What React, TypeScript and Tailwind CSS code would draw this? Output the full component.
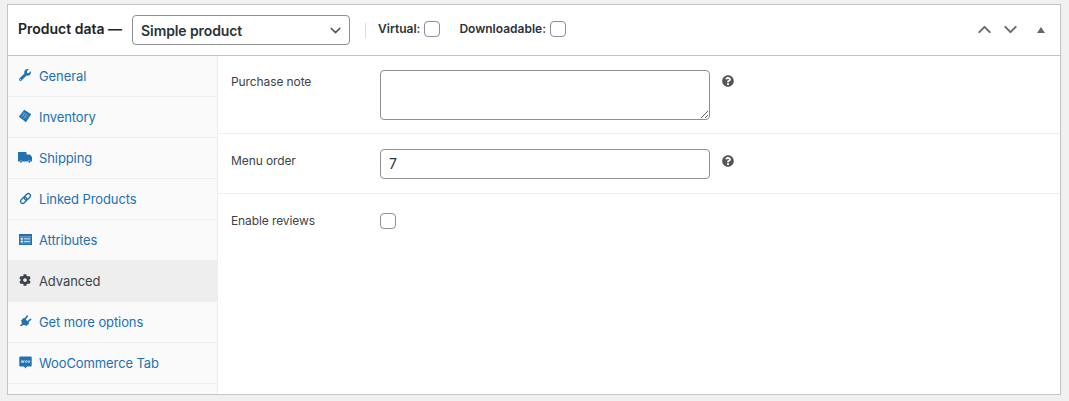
import React from 'react';
import { FaWrench, FaCog, FaQuestionCircle } from 'react-icons/fa';
import { ChevronDown, ChevronUp } from 'lucide-react';

type IconProps = { className?: string };

function WooIcon({ className }: IconProps) {
  return (
    <svg viewBox="0 0 14 14" className={className}>
      <path d="M1.5 0.5h11a1.2 1.2 0 0 1 1.2 1.2v8.4a1.2 1.2 0 0 1-1.2 1.2H8.6L7 13.4 5.4 11.3H1.5a1.2 1.2 0 0 1-1.2-1.2V1.700a1.2 1.2 0 0 1 1.200-1.200z" fill="currentColor" />
      <path d="M2.500 4.800l.7 2.400.8-2.400.8 2.400.7-2.400" fill="none" stroke="#fff" strokeWidth="0.7" />
      <circle cx="7.800" cy="6" r="1" fill="none" stroke="#fff" strokeWidth="0.7" />
      <circle cx="10.700" cy="6" r="1" fill="none" stroke="#fff" strokeWidth="0.7" />
    </svg>
  );
}

function InventoryIcon({ className }: IconProps) {
  return (
    <svg viewBox="0 0 14 14" className={className}>
      <path d="M6.200 0.800L13.200 5.200 8 13.200 0.800 7.800z" fill="currentColor" />
      <path d="M5 3.500l5.500 3.800M3.500 5.500l5.500 3.800M5.600 9.800L8.800 4.800M3.700 8.400L6.800 3.500" stroke="#fff" strokeWidth="0.5" opacity="0.6" />
    </svg>
  );
}

function TruckIcon({ className }: IconProps) {
  return (
    <svg viewBox="0 0 14 11" className={className}>
      <path d="M0 0h8.500v2.500h3.500l2 2.500v4.500h-1.300a1.500 1.500 0 0 0-2.900 0H4.200a1.500 1.500 0 0 0-2.900 0H0z" fill="currentColor" />
      <circle cx="2.800" cy="9.800" r="1" fill="currentColor" />
      <circle cx="11.300" cy="9.800" r="1" fill="currentColor" />
    </svg>
  );
}

function LinkIcon({ className }: IconProps) {
  return (
    <svg viewBox="0 0 14 14" className={className}>
      <g fill="none" stroke="currentColor" strokeWidth="1.500" transform="rotate(-45 7 7)">
        <rect x="0.500" y="4.700" width="7.500" height="4.600" rx="2.300" />
        <rect x="6" y="4.700" width="7.500" height="4.600" rx="2.300" />
      </g>
    </svg>
  );
}

function AttributesIcon({ className }: IconProps) {
  return (
    <svg viewBox="0 0 13 11" className={className}>
      <path fillRule="evenodd" d="M0 0h13v11H0zM1 2.500v7.500h11V2.500z" fill="currentColor" />
      <path d="M1 2.500h11v7.500H1z" fill="currentColor" opacity="0.85" />
      <rect x="1.800" y="4" width="2" height="1.600" fill="#fff" />
      <rect x="1.800" y="6.800" width="2" height="1.600" fill="#fff" />
      <path d="M5 4.800h6M5 7.600h6" stroke="#fff" strokeWidth="0.8" />
    </svg>
  );
}

function PlugIcon({ className }: IconProps) {
  return (
    <svg viewBox="0 0 14 14" className={className}>
      <path d="M1 13l2.200-2.400-.9-3.200 3-3 6 6-.2.100-2.800 2.700-3.200-.9L2 13.700z" fill="currentColor" transform="translate(0 -1.500)" />
      <path d="M6.300 4.500L9 1.200M9.200 7.500l3.300-2.700" stroke="currentColor" strokeWidth="1.700" strokeLinecap="round" />
    </svg>
  );
}

const tabs = [
  { label: 'General', icon: <FaWrench className="w-[12px] h-[12px]" /> },
  { label: 'Inventory', icon: <InventoryIcon className="w-[14px] h-[14px]" /> },
  { label: 'Shipping', icon: <TruckIcon className="w-[14px] h-[11px]" /> },
  { label: 'Linked Products', icon: <LinkIcon className="w-[13px] h-[13px]" /> },
  { label: 'Attributes', icon: <AttributesIcon className="w-[13px] h-[11px]" /> },
  { label: 'Advanced', icon: <FaCog className="w-[12px] h-[12px]" />, active: true },
  { label: 'Get more options', icon: <PlugIcon className="w-[13px] h-[13px]" /> },
  { label: 'WooCommerce Tab', icon: <WooIcon className="w-[13px] h-[13px]" /> },
];

function HelpIcon() {
  return <FaQuestionCircle className="w-[12px] h-[12px] text-[#555]" />;
}

function Checkbox({ className = '' }: { className?: string }) {
  return <input type="checkbox" className={`appearance-none w-4 h-4 bg-white border border-[#8c8f94] rounded ${className}`} />;
}

export default function App() {
  return (
    <div className="w-[1069px] h-[401px] bg-[#f0f0f1] pt-1 pl-[7px] overflow-hidden font-['Inter',sans-serif] text-[13px] text-[#3c434a]">
      <div className="w-[1054px] h-[391px] bg-white border border-[#c3c4c7] flex flex-col">
        <div className="h-[51px] shrink-0 border-b border-[#c3c4c7] flex items-center pl-[10px] pr-[15px]">
          <span className="font-semibold text-[14px] text-[#1d2327] -mt-[3px]">Product data —</span>
          <div className="ml-[10px] w-[218px] h-[30px] border border-[#8c8f94] rounded flex items-center justify-between pl-2 pr-[5px] font-semibold text-[14px] tracking-[-0.1px] text-[#2c3338]">
            <span>Simple product</span>
            <ChevronDown className="w-[17px] h-[17px] text-[#50575e]" strokeWidth={2} />
          </div>
          <div className="ml-[15px] w-px h-[15px] bg-[#dcdcde]" />
          <label className="ml-3 -mt-[2px] flex items-center gap-1 font-semibold text-[12px] text-[#2c3338]">
            Virtual:
            <Checkbox />
          </label>
          <label className="ml-[19px] -mt-[2px] flex items-center gap-1 font-semibold text-[12px] text-[#2c3338]">
            Downloadable:
            <Checkbox />
          </label>
          <div className="ml-auto -mt-[1px] flex items-center text-[#646970]">
            <ChevronUp className="w-[21px] h-[21px]" strokeWidth={2.2} />
            <ChevronDown className="w-[21px] h-[21px] ml-[5px]" strokeWidth={2.2} />
            <div className="ml-[16px] w-0 h-0 border-x-[4px] border-x-transparent border-b-[6px] border-b-[#646970]" />
          </div>
        </div>
        <div className="flex-1 flex min-h-0">
          <ul className="w-[210px] shrink-0 bg-[#fafafa] border-r border-[#eee]">
            {tabs.map((tab) => (
              <li
                key={tab.label}
                className={`h-[41px] flex items-center pl-[10px] tracking-[-0.1px] ${
                  tab.active ? 'bg-[#eee] text-[#3c434a]' : 'border-b border-[#eee] pt-[1px] text-[#2271b1]'
                }`}
              >
                <span className="w-[14px] flex justify-center -mt-[3px]">{tab.icon}</span>
                <span className="ml-[7px]">{tab.label}</span>
              </li>
            ))}
          </ul>
          <div className="flex-1 text-[12px] tracking-[-0.1px]">
            <div className="h-[78px] border-b border-[#eee] flex items-start pl-[13px] pt-[14px]">
              <label className="w-[149px] pt-[3px]">Purchase note</label>
              <textarea className="w-[330px] h-[50px] bg-white border border-[#8c8f94] rounded" />
              <span className="ml-3 mt-[5px]"><HelpIcon /></span>
            </div>
            <div className="h-[60px] border-b border-[#eee] flex items-center pl-[13px]">
              <label className="w-[149px] -mt-[6px]">Menu order</label>
              <input readOnly value="7" className="w-[330px] h-[30px] px-2 text-[14px] text-[#2c3338] border border-[#8c8f94] rounded" />
              <span className="ml-3 -mt-[5px]"><HelpIcon /></span>
            </div>
            <div className="flex items-center pl-[13px] pt-[18px]">
              <label className="w-[149px]">Enable reviews</label>
              <Checkbox />
            </div>
          </div>
        </div>
      </div>
    </div>
  );
}
